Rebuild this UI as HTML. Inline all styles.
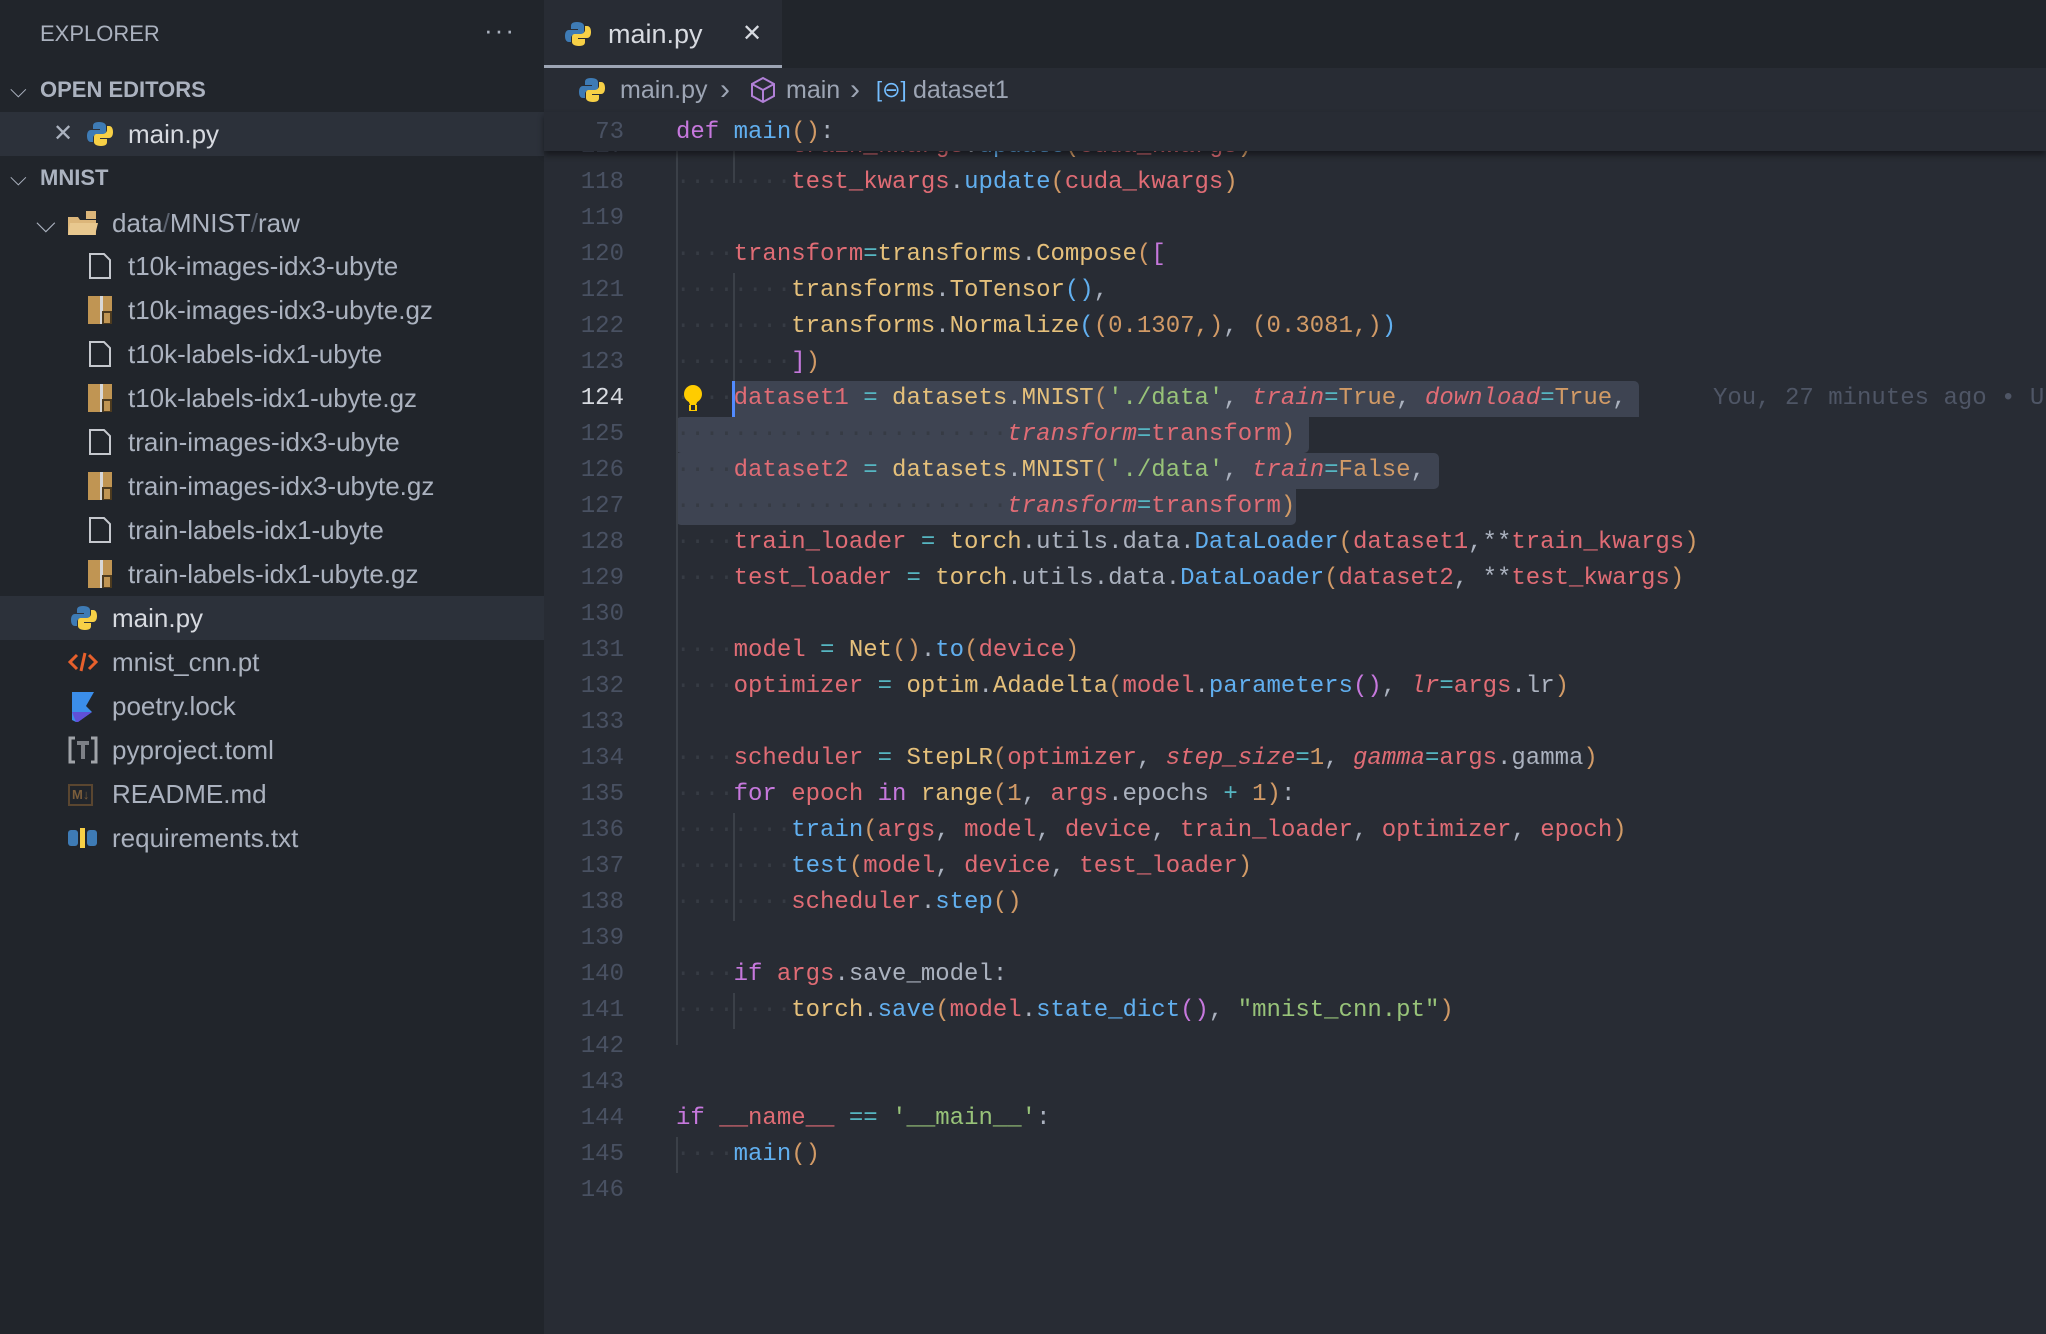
<!DOCTYPE html>
<html><head><meta charset="utf-8"><style>
*{margin:0;padding:0;box-sizing:border-box}
body{width:2046px;height:1334px;background:#282c34;position:relative;overflow:hidden;font-family:"Liberation Sans",sans-serif}
.sb{position:absolute;left:0;top:0;width:544px;height:1334px;background:#21252b}
.row{position:absolute;left:0;width:544px;height:44px;color:#abb2bf;font-size:26px;line-height:44px;white-space:nowrap}
.row .t{position:absolute}
.hdr{font-weight:bold;font-size:22px;color:#abb2bf}
.sel{background:#2c313a}
.ic{position:absolute}
.tabbar{position:absolute;left:544px;top:0;width:1502px;height:68px;background:#21252b}
.tab{position:absolute;left:544px;top:0;width:238px;height:68px;background:#282c34;border-bottom:3px solid #9da5b4}
.code{position:absolute;left:0;top:3px;width:2046px;font-family:"Liberation Mono",monospace;font-size:24px}
.ln{position:absolute;left:544px;width:80px;text-align:right;color:#495162;height:36px;line-height:36px}
.cl{position:absolute;left:676px;height:36px;line-height:36px;white-space:pre;color:#abb2bf}
.r{color:#e06c75}.y{color:#e5c07b}.b{color:#61afef}.p{color:#c678dd}.g{color:#98c379}.o{color:#d19a66}.c{color:#56b6c2}.d{color:#abb2bf}.it{font-style:italic}
.w{color:#363b44;font-style:normal}
.selbox{position:absolute;background:#3e4452;height:36px;border-radius:5px}
.guide{position:absolute;width:2px;background:#3b4048}
</style></head><body>
<div class="sb"></div>
<div class="row" style="top:12px;font-size:22px;color:#abb2bf"><span class="t" style="left:40px">EXPLORER</span><span class="t" style="left:484px;font-size:26px;letter-spacing:2px;top:-4px">···</span></div>
<div class="row hdr" style="top:68px"><span class="t" style="left:10px;font-weight:normal">⌵</span><span class="t" style="left:40px">OPEN EDITORS</span></div>
<div class="row sel" style="top:112px"><span class="t" style="left:53px;font-size:24px">✕</span>
<svg class="ic" style="left:86px;top:8px" width="28" height="28" viewBox="0 0 28 28"><path d="M13 2c-5 0-6 2-6 4v3h7v1H5c-3 0-4 3-4 6s1 6 4 6h2v-4c0-2 2-4 4-4h6c2 0 3-1 3-3V6c0-2-2-4-7-4z" fill="#3e7bb5"/><path d="M15 26c5 0 6-2 6-4v-3h-7v-1h9c3 0 4-3 4-6s-1-6-4-6h-2v4c0 2-2 4-4 4h-6c-2 0-3 1-3 3v5c0 2 2 4 7 4z" fill="#f7d046"/></svg>
<span class="t" style="left:128px;color:#d7dae0">main.py</span></div>
<div class="row hdr" style="top:156px"><span class="t" style="left:10px;font-weight:normal">⌵</span><span class="t" style="left:40px">MNIST</span></div>
<div class="row" style="top:201px"><span class="t" style="left:36px">⌵</span>
<svg class="ic" style="left:68px;top:10px" width="30" height="24" viewBox="0 0 30 24"><path d="M0 6h10l2 3h16v15H0z" fill="#dcb67a"/><path d="M18 0h10v8H18z" fill="#dcb67a"/><path d="M2 12h28l-3 12H0z" fill="#e8c88f"/></svg>
<span class="t" style="left:112px">data<span style="color:#5c6370">/</span>MNIST<span style="color:#5c6370">/</span>raw</span></div>
<div class="row" style="top:244px"><svg class="ic" style="left:88px;top:8px" width="24" height="28"><path d="M2 2h14l6 6v18H2z" fill="none" stroke="#c5c8ce" stroke-width="2"/></svg><span class="t" style="left:128px">t10k-images-idx3-ubyte</span></div>
<div class="row" style="top:288px"><svg class="ic" style="left:88px;top:8px" width="24" height="28"><rect x="0" y="0" width="24" height="28" fill="#c09553"/><rect x="12" y="0" width="3" height="28" fill="#d8d8d8"/><rect x="15" y="16" width="8" height="12" fill="none" stroke="#4d3b1f" stroke-width="2"/></svg><span class="t" style="left:128px">t10k-images-idx3-ubyte.gz</span></div>
<div class="row" style="top:332px"><svg class="ic" style="left:88px;top:8px" width="24" height="28"><path d="M2 2h14l6 6v18H2z" fill="none" stroke="#c5c8ce" stroke-width="2"/></svg><span class="t" style="left:128px">t10k-labels-idx1-ubyte</span></div>
<div class="row" style="top:376px"><svg class="ic" style="left:88px;top:8px" width="24" height="28"><rect x="0" y="0" width="24" height="28" fill="#c09553"/><rect x="12" y="0" width="3" height="28" fill="#d8d8d8"/><rect x="15" y="16" width="8" height="12" fill="none" stroke="#4d3b1f" stroke-width="2"/></svg><span class="t" style="left:128px">t10k-labels-idx1-ubyte.gz</span></div>
<div class="row" style="top:420px"><svg class="ic" style="left:88px;top:8px" width="24" height="28"><path d="M2 2h14l6 6v18H2z" fill="none" stroke="#c5c8ce" stroke-width="2"/></svg><span class="t" style="left:128px">train-images-idx3-ubyte</span></div>
<div class="row" style="top:464px"><svg class="ic" style="left:88px;top:8px" width="24" height="28"><rect x="0" y="0" width="24" height="28" fill="#c09553"/><rect x="12" y="0" width="3" height="28" fill="#d8d8d8"/><rect x="15" y="16" width="8" height="12" fill="none" stroke="#4d3b1f" stroke-width="2"/></svg><span class="t" style="left:128px">train-images-idx3-ubyte.gz</span></div>
<div class="row" style="top:508px"><svg class="ic" style="left:88px;top:8px" width="24" height="28"><path d="M2 2h14l6 6v18H2z" fill="none" stroke="#c5c8ce" stroke-width="2"/></svg><span class="t" style="left:128px">train-labels-idx1-ubyte</span></div>
<div class="row" style="top:552px"><svg class="ic" style="left:88px;top:8px" width="24" height="28"><rect x="0" y="0" width="24" height="28" fill="#c09553"/><rect x="12" y="0" width="3" height="28" fill="#d8d8d8"/><rect x="15" y="16" width="8" height="12" fill="none" stroke="#4d3b1f" stroke-width="2"/></svg><span class="t" style="left:128px">train-labels-idx1-ubyte.gz</span></div>
<div class="row sel" style="top:596px"><svg class="ic" style="left:70px;top:8px" width="28" height="28" viewBox="0 0 28 28"><path d="M13 2c-5 0-6 2-6 4v3h7v1H5c-3 0-4 3-4 6s1 6 4 6h2v-4c0-2 2-4 4-4h6c2 0 3-1 3-3V6c0-2-2-4-7-4z" fill="#3e7bb5"/><path d="M15 26c5 0 6-2 6-4v-3h-7v-1h9c3 0 4-3 4-6s-1-6-4-6h-2v4c0 2-2 4-4 4h-6c-2 0-3 1-3 3v5c0 2 2 4 7 4z" fill="#f7d046"/></svg><span class="t" style="left:112px;color:#d7dae0">main.py</span></div>
<div class="row" style="top:640px"><svg class="ic" style="left:68px;top:12px" width="30" height="20"><path d="M9 3L2 10l7 7M21 3l7 7-7 7M17 1l-4 18" fill="none" stroke="#e8602c" stroke-width="3"/></svg><span class="t" style="left:112px">mnist_cnn.pt</span></div>
<div class="row" style="top:684px"><svg class="ic" style="left:72px;top:8px" width="24" height="30"><path d="M0 0h22l-8 14 6 6-14 10H4L0 28z" fill="#3b8eea"/><path d="M0 20l20 0-14 10H4z" fill="#6050d8"/></svg><span class="t" style="left:112px">poetry.lock</span></div>
<div class="row" style="top:728px"><svg class="ic" style="left:68px;top:8px" width="30" height="28"><path d="M7 2H2v24h5M23 2h5v24h-5" fill="none" stroke="#a0a3a8" stroke-width="3"/><path d="M9 7h12M15 7v16" stroke="#7d8086" stroke-width="4"/></svg><span class="t" style="left:112px">pyproject.toml</span></div>
<div class="row" style="top:772px"><span class="t" style="left:68px;top:12px;line-height:18px;font-size:13px;font-weight:bold;color:#7a5d3b;border:2px solid #5a4630;padding:0 2px">M↓</span><span class="t" style="left:112px">README.md</span></div>
<div class="row" style="top:816px"><svg class="ic" style="left:68px;top:12px" width="30" height="20"><rect x="0" y="2" width="10" height="16" rx="3" fill="#3e7bb5"/><rect x="12" y="0" width="5" height="20" fill="#f7d046"/><rect x="19" y="2" width="10" height="16" rx="3" fill="#3e7bb5"/></svg><span class="t" style="left:112px">requirements.txt</span></div>

<div class="tabbar"></div>
<div class="tab">
<svg style="position:absolute;left:20px;top:20px" width="28" height="28" viewBox="0 0 28 28"><path d="M13 2c-5 0-6 2-6 4v3h7v1H5c-3 0-4 3-4 6s1 6 4 6h2v-4c0-2 2-4 4-4h6c2 0 3-1 3-3V6c0-2-2-4-7-4z" fill="#3e7bb5"/><path d="M15 26c5 0 6-2 6-4v-3h-7v-1h9c3 0 4-3 4-6s-1-6-4-6h-2v4c0 2-2 4-4 4h-6c-2 0-3 1-3 3v5c0 2 2 4 7 4z" fill="#f7d046"/></svg>
<span style="position:absolute;left:64px;top:19px;font-size:27px;color:#d7dae0">main.py</span>
<span style="position:absolute;left:198px;top:19px;font-size:24px;color:#d7dae0">✕</span>
</div>
<div style="position:absolute;left:544px;top:68px;width:1502px;height:44px;font-size:25px;color:#9da5b4;line-height:44px;white-space:nowrap">
<svg style="position:absolute;left:34px;top:8px" width="28" height="28" viewBox="0 0 28 28"><path d="M13 2c-5 0-6 2-6 4v3h7v1H5c-3 0-4 3-4 6s1 6 4 6h2v-4c0-2 2-4 4-4h6c2 0 3-1 3-3V6c0-2-2-4-7-4z" fill="#3e7bb5"/><path d="M15 26c5 0 6-2 6-4v-3h-7v-1h9c3 0 4-3 4-6s-1-6-4-6h-2v4c0 2-2 4-4 4h-6c-2 0-3 1-3 3v5c0 2 2 4 7 4z" fill="#f7d046"/></svg>
<span style="position:absolute;left:76px">main.py</span><span style="position:absolute;left:176px;font-size:30px">›</span>
<svg style="position:absolute;left:206px;top:8px" width="26" height="28"><path d="M13 2l11 6v12l-11 6-11-6V8zM2 8l11 6 11-6M13 14v12" fill="none" stroke="#b180d7" stroke-width="2"/></svg>
<span style="position:absolute;left:242px">main</span><span style="position:absolute;left:306px;font-size:30px">›</span>
<span style="position:absolute;left:332px;color:#75beff;font-size:22px">[⊖]</span>
<span style="position:absolute;left:369px">dataset1</span>
</div>

<div class="code">
<div class="selbox" style="left:733px;top:378px;width:906px;border-radius:0 5px 0 0"></div>
<div class="selbox" style="left:676px;top:414px;width:633px;border-radius:5px 0 5px 5px"></div>
<div class="selbox" style="left:676px;top:450px;width:763px;border-radius:0 5px 5px 0"></div>
<div class="selbox" style="left:676px;top:486px;width:620px;border-radius:0 0 5px 5px"></div>
<div style="position:absolute;left:732px;top:378px;width:3px;height:36px;background:#528bff"></div>
<div class="guide" style="left:676px;top:148px;height:894px"></div>
<div class="guide" style="left:733px;top:148px;height:32px"></div>
<div class="guide" style="left:733px;top:270px;height:108px"></div>
<div class="guide" style="left:733px;top:810px;height:108px"></div>
<div class="guide" style="left:733px;top:990px;height:36px"></div>
<div class="guide" style="left:676px;top:1134px;height:36px"></div>

<div class="ln" style="top:126px">117</div><div class="cl" style="top:126px"><i class="w">········</i><span class="r">train_kwargs</span>.<span class="b">update</span><span class="o">(</span><span class="r">cuda_kwargs</span><span class="o">)</span></div>
<div class="ln" style="top:162px">118</div><div class="cl" style="top:162px"><i class="w">········</i><span class="r">test_kwargs</span>.<span class="b">update</span><span class="o">(</span><span class="r">cuda_kwargs</span><span class="o">)</span></div>
<div class="ln" style="top:198px">119</div>
<div class="ln" style="top:234px">120</div><div class="cl" style="top:234px"><i class="w">····</i><span class="r">transform</span><span class="c">=</span><span class="y">transforms</span>.<span class="y">Compose</span><span class="o">(</span><span class="p">[</span></div>
<div class="ln" style="top:270px">121</div><div class="cl" style="top:270px"><i class="w">········</i><span class="y">transforms</span>.<span class="y">ToTensor</span><span class="b">()</span>,</div>
<div class="ln" style="top:306px">122</div><div class="cl" style="top:306px"><i class="w">········</i><span class="y">transforms</span>.<span class="y">Normalize</span><span class="b">(</span><span class="o">(0.1307,)</span>, <span class="o">(0.3081,)</span><span class="b">)</span></div>
<div class="ln" style="top:342px">123</div><div class="cl" style="top:342px"><i class="w">········</i><span class="p">]</span><span class="o">)</span></div>
<div class="ln" style="top:378px;color:#d7dae0">124</div><div class="cl" style="top:378px"><i class="w">····</i><span class="r">dataset1</span> <span class="c">=</span> <span class="y">datasets</span>.<span class="y">MNIST</span><span class="o">(</span><span class="g">'./data'</span>, <span class="r it">train</span><span class="c">=</span><span class="o">True</span>, <span class="r it">download</span><span class="c">=</span><span class="o">True</span>,</div>
<div class="ln" style="top:414px">125</div><div class="cl" style="top:414px"><i class="w">·······················</i><span class="r it">transform</span><span class="c">=</span><span class="r">transform</span><span class="o">)</span></div>
<div class="ln" style="top:450px">126</div><div class="cl" style="top:450px"><i class="w">····</i><span class="r">dataset2</span> <span class="c">=</span> <span class="y">datasets</span>.<span class="y">MNIST</span><span class="o">(</span><span class="g">'./data'</span>, <span class="r it">train</span><span class="c">=</span><span class="o">False</span>,</div>
<div class="ln" style="top:486px">127</div><div class="cl" style="top:486px"><i class="w">·······················</i><span class="r it">transform</span><span class="c">=</span><span class="r">transform</span><span class="o">)</span></div>
<div class="ln" style="top:522px">128</div><div class="cl" style="top:522px"><i class="w">····</i><span class="r">train_loader</span> <span class="c">=</span> <span class="y">torch</span>.utils.data.<span class="b">DataLoader</span><span class="o">(</span><span class="r">dataset1</span>,**<span class="r">train_kwargs</span><span class="o">)</span></div>
<div class="ln" style="top:558px">129</div><div class="cl" style="top:558px"><i class="w">····</i><span class="r">test_loader</span> <span class="c">=</span> <span class="y">torch</span>.utils.data.<span class="b">DataLoader</span><span class="o">(</span><span class="r">dataset2</span>, **<span class="r">test_kwargs</span><span class="o">)</span></div>
<div class="ln" style="top:594px">130</div>
<div class="ln" style="top:630px">131</div><div class="cl" style="top:630px"><i class="w">····</i><span class="r">model</span> <span class="c">=</span> <span class="y">Net</span><span class="o">()</span>.<span class="b">to</span><span class="o">(</span><span class="r">device</span><span class="o">)</span></div>
<div class="ln" style="top:666px">132</div><div class="cl" style="top:666px"><i class="w">····</i><span class="r">optimizer</span> <span class="c">=</span> <span class="y">optim</span>.<span class="y">Adadelta</span><span class="o">(</span><span class="r">model</span>.<span class="b">parameters</span><span class="p">()</span>, <span class="r it">lr</span><span class="c">=</span><span class="r">args</span>.lr<span class="o">)</span></div>
<div class="ln" style="top:702px">133</div>
<div class="ln" style="top:738px">134</div><div class="cl" style="top:738px"><i class="w">····</i><span class="r">scheduler</span> <span class="c">=</span> <span class="y">StepLR</span><span class="o">(</span><span class="r">optimizer</span>, <span class="r it">step_size</span><span class="c">=</span><span class="o">1</span>, <span class="r it">gamma</span><span class="c">=</span><span class="r">args</span>.gamma<span class="o">)</span></div>
<div class="ln" style="top:774px">135</div><div class="cl" style="top:774px"><i class="w">····</i><span class="p">for</span> <span class="r">epoch</span> <span class="p">in</span> <span class="y">range</span><span class="o">(1</span>, <span class="r">args</span>.epochs <span class="c">+</span> <span class="o">1)</span>:</div>
<div class="ln" style="top:810px">136</div><div class="cl" style="top:810px"><i class="w">········</i><span class="b">train</span><span class="o">(</span><span class="r">args</span>, <span class="r">model</span>, <span class="r">device</span>, <span class="r">train_loader</span>, <span class="r">optimizer</span>, <span class="r">epoch</span><span class="o">)</span></div>
<div class="ln" style="top:846px">137</div><div class="cl" style="top:846px"><i class="w">········</i><span class="b">test</span><span class="o">(</span><span class="r">model</span>, <span class="r">device</span>, <span class="r">test_loader</span><span class="o">)</span></div>
<div class="ln" style="top:882px">138</div><div class="cl" style="top:882px"><i class="w">········</i><span class="r">scheduler</span>.<span class="b">step</span><span class="o">()</span></div>
<div class="ln" style="top:918px">139</div>
<div class="ln" style="top:954px">140</div><div class="cl" style="top:954px"><i class="w">····</i><span class="p">if</span> <span class="r">args</span>.save_model:</div>
<div class="ln" style="top:990px">141</div><div class="cl" style="top:990px"><i class="w">········</i><span class="y">torch</span>.<span class="b">save</span><span class="o">(</span><span class="r">model</span>.<span class="b">state_dict</span><span class="p">()</span>, <span class="g">"mnist_cnn.pt"</span><span class="o">)</span></div>
<div class="ln" style="top:1026px">142</div>
<div class="ln" style="top:1062px">143</div>
<div class="ln" style="top:1098px">144</div><div class="cl" style="top:1098px"><span class="p">if</span> <span class="r">__name__</span> <span class="c">==</span> <span class="g">'__main__'</span>:</div>
<div class="ln" style="top:1134px">145</div><div class="cl" style="top:1134px"><i class="w">····</i><span class="b">main</span><span class="o">()</span></div>
<div class="ln" style="top:1170px">146</div>

<div style="position:absolute;left:1713px;top:378px;height:36px;line-height:36px;color:#4f5666;white-space:pre">You, 27 minutes ago • U</div>
<svg style="position:absolute;left:682px;top:380px" width="22" height="32"><circle cx="11" cy="11" r="9" fill="#ffcc00"/><path d="M5 14h12l-3 8H8z" fill="#ffcc00"/><rect x="7" y="22" width="8" height="6" fill="#ffcc00"/><rect x="9" y="22" width="4" height="5" fill="#282c34"/></svg>

<div style="position:absolute;left:544px;top:109px;width:1502px;height:39px;background:#282c34;box-shadow:0 4px 6px rgba(0,0,0,0.45)"></div>
<div class="ln" style="top:112px">73</div><div class="cl" style="top:112px"><span class="p">def</span> <span class="b">main</span><span class="o">()</span>:</div>
</div>
</body></html>
